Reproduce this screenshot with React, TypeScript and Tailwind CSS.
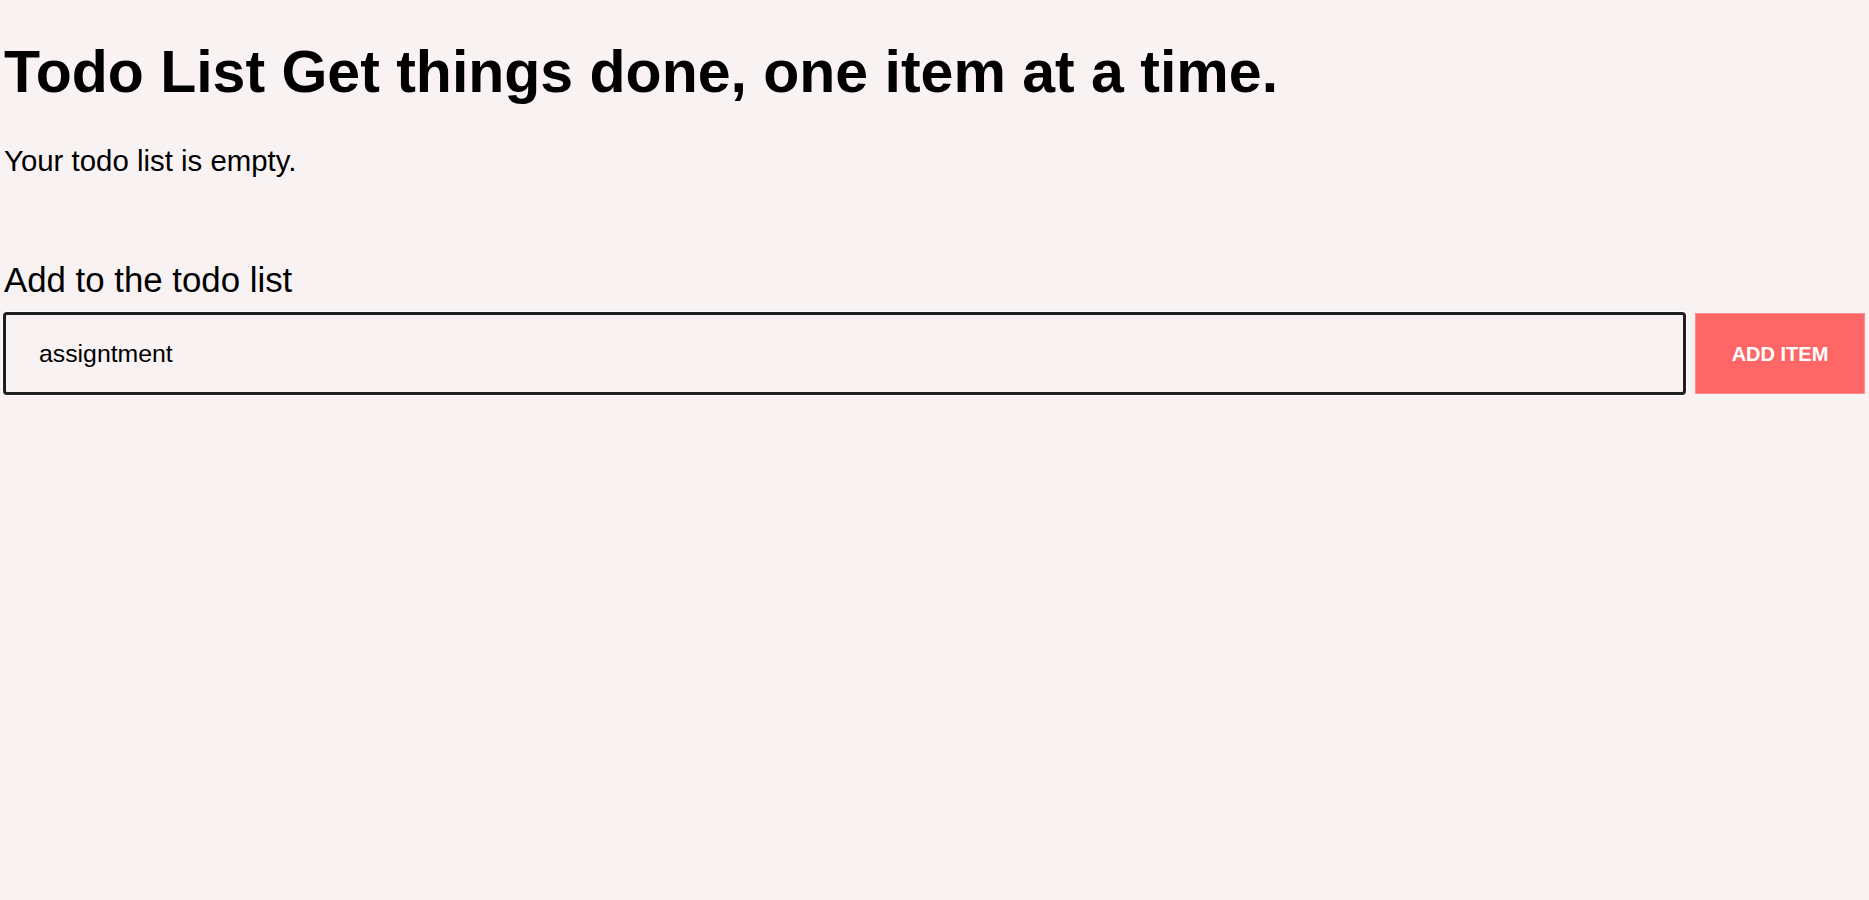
import { useState } from 'react';

/** Single-screen todo list: heading, empty state, and the add form. */
export default function App() {
  const [draft, setDraft] = useState('assigntment');
  const [items, setItems] = useState<string[]>([]);

  const addItem = () => {
    const text = draft.trim();
    if (!text) return;
    setItems((prev) => [...prev, text]);
    setDraft('');
  };

  return (
    <div className="min-h-screen bg-[#f8f2f2] font-['Liberation_Sans',Arial,sans-serif] text-black">
      <div className="flex flex-col pl-[3px] pr-[4px]">
        <h1 className="mt-[38px] pl-[1px] text-[59px] font-bold leading-[68px]">
          Todo List Get things done, one item at a time.
        </h1>

        {items.length === 0 ? (
          <p className="mt-[38px] pl-[1px] text-[29.4px] leading-[34px]">Your todo list is empty.</p>
        ) : (
          <ul className="mt-[38px] pl-[1px] text-[29.4px] leading-[34px]">
            {items.map((item, i) => (
              <li key={i}>{item}</li>
            ))}
          </ul>
        )}

        <h2 className="mt-[82px] pl-[1px] text-[34.8px] leading-[40px]">Add to the todo list</h2>

        <form
          className="mt-[12px] flex items-center gap-[9px]"
          onSubmit={(e) => {
            e.preventDefault();
            addItem();
          }}
        >
          <input
            value={draft}
            onChange={(e) => setDraft(e.target.value)}
            spellCheck
            className="h-[83px] min-w-0 flex-1 rounded-[4px] border-[3px] border-[#1f1f1f] bg-transparent pl-[33px] text-[24.8px] text-black shadow-[0_0_0_1px_#ffffff] outline-none"
          />
          <button
            type="submit"
            className="h-[81px] w-[170px] shrink-0 border border-[#ff8c8c] bg-[#ff6666] text-[20px] font-bold text-white"
          >
            ADD ITEM
          </button>
        </form>
      </div>
    </div>
  );
}
